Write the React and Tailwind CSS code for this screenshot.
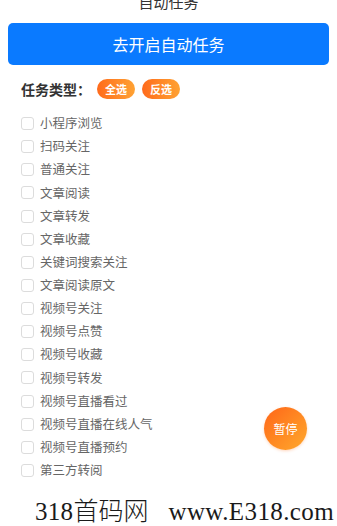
import React from "react";

const items = [
  "小程序浏览",
  "扫码关注",
  "普通关注",
  "文章阅读",
  "文章转发",
  "文章收藏",
  "关键词搜索关注",
  "文章阅读原文",
  "视频号关注",
  "视频号点赞",
  "视频号收藏",
  "视频号转发",
  "视频号直播看过",
  "视频号直播在线人气",
  "视频号直播预约",
  "第三方转阅",
];

export default function App() {
  return (
    <div
      className="relative w-[337px] h-[526px] overflow-hidden bg-white"
      style={{ fontFamily: '"Noto Sans CJK SC", "Noto Sans", sans-serif' }}
    >
      <div className="mt-[-6px] h-[15px] text-center text-[15px] leading-[15px] text-[#333]">
        自动任务
      </div>
      <div className="mt-[14px] px-2">
        <button className="flex h-[42px] w-full items-center justify-center rounded-[5px] bg-[#0a7aff] text-[16px] text-white">
          去开启自动任务
        </button>
      </div>
      <div className="mt-[14px] flex h-[20px] items-center pl-[21px]">
        <span className="text-[14px] font-bold text-[#333]">任务类型：</span>
        <span className="ml-[6px] flex h-[20px] w-[38px] items-center justify-center rounded-full bg-gradient-to-r from-[#ff6a1c] to-[#ffa233] text-[11px] font-bold text-white">
          全选
        </span>
        <span className="ml-[7px] flex h-[20px] w-[38px] items-center justify-center rounded-full bg-gradient-to-r from-[#ff6a1c] to-[#ffa233] text-[11px] font-bold text-white">
          反选
        </span>
      </div>
      <div className="mt-[13px] flex flex-col pl-[21px]">
        {items.map((t) => (
          <div key={t} className="flex h-[23.13px] items-center">
            <span className="h-[13px] w-[13px] rounded-[3px] border border-[#dcdcdc] bg-white" />
            <span className="ml-[6px] text-[12.5px] text-[#666]">{t}</span>
          </div>
        ))}
      </div>
      <div className="absolute left-[264px] top-[407px] flex h-[43px] w-[43px] items-center justify-center rounded-full bg-gradient-to-br from-[#ff6418] to-[#ffa82c] text-[12px] text-white shadow-[0_1px_3px_rgba(255,120,40,0.3)]">
        暂停
      </div>
      <div
        className="absolute left-[35px] top-[497px] flex items-baseline whitespace-nowrap text-[25px] leading-[25px] text-[#1a1a1a]"
        style={{ fontFamily: '"Liberation Serif", "Noto Sans CJK SC", serif' }}
      >
        <span className="tracking-[0.3px]">318</span>
        <span className="font-light" style={{ fontFamily: '"Noto Sans CJK SC", serif' }}>首码网</span>
        <span className="ml-[20px] tracking-[0.4px]">www.E318.com</span>
      </div>
    </div>
  );
}
